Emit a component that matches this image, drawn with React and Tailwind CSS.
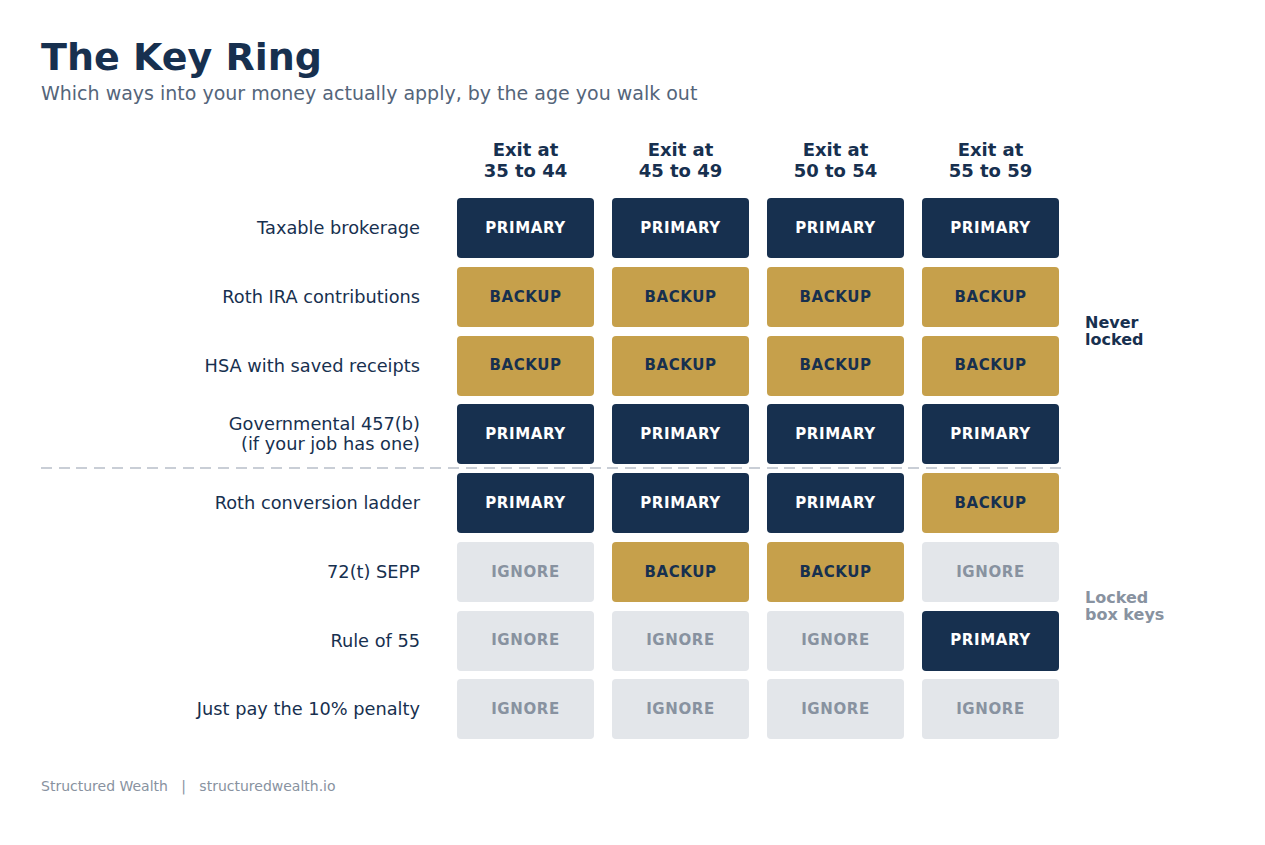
const COLS = ["35 to 44", "45 to 49", "50 to 54", "55 to 59"];

const GROUPS = [
  {
    note: ["Never", "locked"],
    noteClass: "text-[#17304f]",
    rows: [
      { label: ["Taxable brokerage"], cells: ["P", "P", "P", "P"] },
      { label: ["Roth IRA contributions"], cells: ["B", "B", "B", "B"] },
      { label: ["HSA with saved receipts"], cells: ["B", "B", "B", "B"] },
      { label: ["Governmental 457(b)", "(if your job has one)"], cells: ["P", "P", "P", "P"] },
    ],
  },
  {
    note: ["Locked", "box keys"],
    noteClass: "text-[#8892a0]",
    rows: [
      { label: ["Roth conversion ladder"], cells: ["P", "P", "P", "B"] },
      { label: ["72(t) SEPP"], cells: ["I", "B", "B", "I"] },
      { label: ["Rule of 55"], cells: ["I", "I", "I", "P"] },
      { label: ["Just pay the 10% penalty"], cells: ["I", "I", "I", "I"] },
    ],
  },
];

const CELL = {
  P: { text: "PRIMARY", cls: "bg-[#17304f] text-white" },
  B: { text: "BACKUP", cls: "bg-[#c6a04b] text-[#17304f]" },
  I: { text: "IGNORE", cls: "bg-[#e3e6ea] text-[#8892a0]" },
};

function Cell({ kind }) {
  const c = CELL[kind];
  return (
    <div className={`h-[60px] rounded-[4px] flex items-center justify-center text-[15px] font-bold tracking-[0.6px] ${c.cls}`}>
      {c.text}
    </div>
  );
}

function Group({ group }) {
  return (
    <div className="flex items-center">
      <div className="grid grid-cols-[398px_137px_137px_137px_137px] gap-x-[18px] gap-y-[8.75px]">
        {group.rows.map((row, i) => (
          <div key={i} className="contents">
            <div className="pr-[19px] flex flex-col items-end justify-center text-right text-[17.75px] leading-[20px] text-[#17304f]">
              {row.label.map((l) => (
                <span key={l}>{l}</span>
              ))}
            </div>
            {row.cells.map((k, j) => (
              <Cell key={j} kind={k} />
            ))}
          </div>
        ))}
      </div>
      <div className={`ml-[26px] w-[100px] text-[16px] leading-[17px] font-bold ${group.noteClass}`}>
        {group.note[0]}
        <br />
        {group.note[1]}
      </div>
    </div>
  );
}

export default function App() {
  return (
    <div className="min-h-[845px] bg-white pl-[41px] pt-[34px] font-['DejaVu_Sans',sans-serif]">
      <h1 className="text-[38px] leading-[46px] font-bold text-[#17304f]">The Key Ring</h1>
      <p className="mt-[2px] text-[19px] leading-[22px] text-[#54657a]">
        Which ways into your money actually apply, by the age you walk out
      </p>

      {/* COLUMN HEADERS */}
      <div className="mt-[35px] grid grid-cols-[398px_137px_137px_137px_137px] gap-x-[18px]">
        <div />
        {COLS.map((c) => (
          <div key={c} className="text-center text-[18px] leading-[21px] font-bold text-[#17304f]">
            Exit at
            <br />
            {c}
          </div>
        ))}
      </div>

      <div className="mt-[17px]">
        <Group group={GROUPS[0]} />
        <div className="w-[1027px] h-[2px] mt-[3px] mb-[3.75px] bg-[repeating-linear-gradient(90deg,#c9ced6_0_11px,transparent_11px_17.7px)]" />
        <Group group={GROUPS[1]} />
      </div>

      <div className="mt-[37px] text-[14px] text-[#8892a0] whitespace-pre">
        {"Structured Wealth   |   structuredwealth.io"}
      </div>
    </div>
  );
}
